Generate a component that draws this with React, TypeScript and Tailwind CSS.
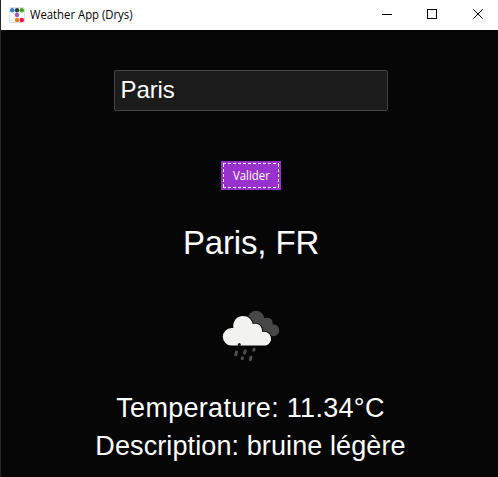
const Logo = () => (
  <svg className="block h-4 w-4" viewBox="0 0 16 16">
    <rect x="0.5" y="0.5" width="15" height="15" rx="1" fill="#fdfdfd" stroke="#dedede" />
    <circle cx="3.2" cy="3.2" r="2.2" fill="#2f7de1" />
    <circle cx="8" cy="3.2" r="2.2" fill="#343b45" />
    <circle cx="12.8" cy="3.2" r="2.2" fill="#37ad0d" />
    <circle cx="8" cy="8" r="2.2" fill="#955fc0" />
    <circle cx="8" cy="13" r="2.2" fill="#ff7a1c" />
    <circle cx="12.8" cy="13" r="2.2" fill="#ff083f" />
  </svg>
);

const RainCloud = () => (
  <svg className="block h-[54px] w-[60px]" viewBox="221 309 60 54">
    <g fill="#484849">
      <circle cx="256" cy="319" r="8.2" />
      <circle cx="267.5" cy="323" r="5.2" />
      <circle cx="273.2" cy="330.2" r="6" />
      <path d="M250 318h20v18h-20z" />
    </g>
    <g fill="#f2f2f1" stroke="#070707" strokeWidth="2" paintOrder="stroke">
      <path d="M231.5 345.5a8.7 8.7 0 0 1 0-17.4h1.9c-1.2-6.5 3.4-12.1 9.6-12.1 5 0 8.8 3.5 9.8 8.2 4.4-1.6 9 1.3 9.2 6 .1.6 0 1.3-.1 1.9 5-1.3 9.1 2.1 9.1 6.6 0 3.8-2.9 6.8-6.5 6.8z" />
    </g>
    <circle cx="239.3" cy="344.5" r="1.5" fill="#151515" />
    <g stroke="#505050" strokeWidth="3" strokeLinecap="round">
      <path d="M236.5 352l-.8 2.8M245.3 351l-.8 2.2M254.1 349.2l-.4 1M242.5 358l-.2.7M251 357.2l-.7 2.4" />
    </g>
  </svg>
);

export default function App() {
  return (
    <div className="flex h-[477px] w-[498px] flex-col overflow-hidden border-l border-[#25252c] bg-[#060606] font-['Liberation_Sans',Arial,sans-serif] text-white">
      <header className="flex h-[30px] shrink-0 items-center bg-white pl-2 text-black">
        <Logo />
        <span className="ml-[5px] origin-left scale-x-[0.943] whitespace-nowrap font-['Open_Sans','Noto_Sans',sans-serif] text-xs">
          Weather App (Drys)
        </span>
        <svg className="ml-auto block h-[30px] w-[128px]" viewBox="370 0 128 30" fill="none" stroke="#000" shapeRendering="crispEdges">
          <path d="M382 14.5h10" />
          <rect x="427.5" y="9.5" width="9" height="9" />
          <path d="M473.2 9.2l9.6 9.6M482.8 9.2l-9.6 9.6" shapeRendering="auto" />
        </svg>
      </header>
      <main className="flex flex-1 flex-col items-center pl-0.5 pt-10">
        <input
          aria-label="Ville"
          defaultValue="Paris"
          className="h-[41px] w-[274px] shrink-0 rounded-[2px] border border-[#454545] bg-[#1b1b1b] px-1.5 pb-0.5 text-2xl leading-none tracking-[-0.1px] outline-none"
        />
        <button className="relative mt-[50px] flex h-[29px] w-[60px] shrink-0 items-center justify-center bg-[#9932cc] font-['Open_Sans','Noto_Sans',sans-serif] text-xs leading-none">
          <svg className="absolute inset-0 h-full w-full" viewBox="0 0 60 29" fill="none" stroke="#fff" shapeRendering="crispEdges">
            <path d="M2 2.5h56M57.5 3v23M2 26.5h56M2.5 3v23" strokeDasharray="3 2" />
          </svg>
          <span className="scale-x-95 pl-0.5">Valider</span>
        </button>
        <h1 className="mt-[34px] h-[38px] whitespace-nowrap pl-px text-[33px] leading-[38px] tracking-[-0.15px]">Paris, FR</h1>
        <div className="mt-[47px]">
          <RainCloud />
        </div>
        <p className="mt-[26px] h-[38px] whitespace-nowrap text-[27px] leading-[38px] tracking-[0.3px]">Temperature: 11.34°C</p>
        <p className="h-[38px] whitespace-nowrap text-[27px] leading-[38px] tracking-[0.1px]">Description: bruine légère</p>
      </main>
    </div>
  );
}
